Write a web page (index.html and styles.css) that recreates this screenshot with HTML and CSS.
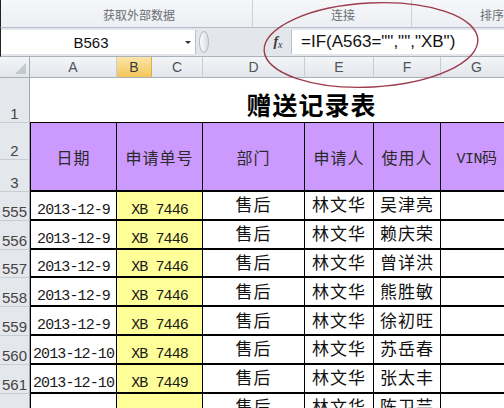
FILE: index.html
```html
<!DOCTYPE html>
<html lang="zh-CN">
<head>
<meta charset="utf-8">
<title>赠送记录表</title>
<link rel="stylesheet" href="styles.css">
</head>
<body>
<div class="screen">
  <div class="ribbon">
    <div class="group g1"><span>获取外部数据</span></div>
    <div class="group g2"><span>连接</span></div>
    <div class="group g3"><span>排序</span></div>
  </div>
  <div class="fbar">
    <div class="namebox">B563</div>
    <div class="nb-arrow"><span class="tri"></span></div>
    <div class="splitter"><span class="handle"></span></div>
    <div class="fx"><span class="fx-f">f</span><span class="fx-x">x</span></div>
    <div class="formula">=IF(A563="","","XB")</div>
  </div>
  <div class="sheet">
    <div class="ch corner"><span class="corner-tri"></span></div>
    <div class="ch">A</div>
    <div class="ch sel">B</div>
    <div class="ch">C</div>
    <div class="ch">D</div>
    <div class="ch">E</div>
    <div class="ch">F</div>
    <div class="ch">G</div>

    <div class="rh">1</div>
    <div class="title">赠送记录表</div>

    <div class="rh">2</div>
    <div class="hd a">日期</div>
    <div class="hd bc">申请单号</div>
    <div class="hd">部门</div>
    <div class="hd">申请人</div>
    <div class="hd">使用人</div>
    <div class="hd vin">VIN码</div>
    <div class="rh">3</div>

    <div class="rh">555</div><div class="c a">2013-12-9</div><div class="c bc">XB 7446</div><div class="c">售后</div><div class="c">林文华</div><div class="c">吴津亮</div><div class="c"></div>
    <div class="rh">556</div><div class="c a">2013-12-9</div><div class="c bc">XB 7446</div><div class="c">售后</div><div class="c">林文华</div><div class="c">赖庆荣</div><div class="c"></div>
    <div class="rh">557</div><div class="c a">2013-12-9</div><div class="c bc">XB 7446</div><div class="c">售后</div><div class="c">林文华</div><div class="c">曾详洪</div><div class="c"></div>
    <div class="rh">558</div><div class="c a">2013-12-9</div><div class="c bc">XB 7446</div><div class="c">售后</div><div class="c">林文华</div><div class="c">熊胜敏</div><div class="c"></div>
    <div class="rh">559</div><div class="c a">2013-12-9</div><div class="c bc">XB 7446</div><div class="c">售后</div><div class="c">林文华</div><div class="c">徐初旺</div><div class="c"></div>
    <div class="rh">560</div><div class="c a">2013-12-10</div><div class="c bc">XB 7448</div><div class="c">售后</div><div class="c">林文华</div><div class="c">苏岳春</div><div class="c"></div>
    <div class="rh">561</div><div class="c a">2013-12-10</div><div class="c bc">XB 7449</div><div class="c">售后</div><div class="c">林文华</div><div class="c">张太丰</div><div class="c"></div>
    <div class="rh">562</div><div class="c a"></div><div class="c bc"></div><div class="c">售后</div><div class="c">林文华</div><div class="c">陈卫芸</div><div class="c"></div>
  </div>
  <svg class="annot" width="504" height="408" viewBox="0 0 504 408">
    <ellipse cx="371" cy="45" rx="107" ry="42" transform="rotate(-3 371 45)" fill="none" stroke="#9c3b4c" stroke-width="1.4"/>
  </svg>
</div>
</body>
</html>
```

FILE: styles.css
```css
body {
  margin: 0;
}

.screen {
  position: relative;
  width: 504px;
  height: 408px;
  overflow: hidden;
  background: #fff;
  font-family: "Liberation Sans", Arial, sans-serif;
}

/* ribbon group labels */
.ribbon {
  display: flex;
  height: 27px;
  background: linear-gradient(#f6f7f9, #eceff3);
  border-left: 1px solid #222;
}

.group {
  display: flex;
  align-items: center;
  padding-top: 2px;
  box-sizing: border-box;
  border-right: 1px solid #cbd1d9;
  font-family: "Noto Sans CJK SC", sans-serif;
  font-size: 12px;
  color: #6a6d72;
  white-space: nowrap;
}

.g1 {
  width: 254px;
  padding-left: 102px;
}

.g2 {
  width: 160px;
  padding-left: 78px;
}

.g3 {
  flex: 1;
  padding-left: 68px;
  border-right: none;
}

/* formula bar */
.fbar {
  display: flex;
  height: 24px;
  padding: 2px 0 2px;
  background: #e3e7ec;
  border-top: 1px solid #b5bcc6;
  border-bottom: 1px solid #a9b1bb;
  border-left: 1px solid #222;
}

.namebox {
  width: 180px;
  background: #fff;
  display: flex;
  align-items: center;
  justify-content: center;
  font-size: 15px;
  color: #111;
}

.nb-arrow {
  width: 14px;
  background: #fff;
  display: flex;
  align-items: center;
  justify-content: center;
  border-right: 1px solid #b9c0c8;
}

.tri {
  width: 0;
  height: 0;
  border-left: 3px solid transparent;
  border-right: 3px solid transparent;
  border-top: 3px solid #333;
}

.splitter {
  width: 69px;
  display: flex;
  align-items: center;
  padding-left: 3px;
  box-sizing: border-box;
}

.handle {
  width: 8px;
  height: 20px;
  border-radius: 50%;
  border: 1px solid #b3bac3;
  background: linear-gradient(90deg, #fdfdfe, #d8dde3);
}

.fx {
  width: 26px;
  display: flex;
  align-items: center;
  justify-content: center;
  font-family: "Liberation Serif", serif;
  font-style: italic;
  color: #3a3a3a;
  border-right: 1px solid #b9c0c8;
}

.fx-f {
  font-size: 14px;
  font-weight: bold;
}

.fx-x {
  font-size: 10px;
  margin-top: 4px;
}

.formula {
  flex: 1;
  background: #fff;
  display: flex;
  align-items: center;
  padding-left: 9px;
  font-size: 17px;
  color: #111;
  white-space: nowrap;
}

/* sheet grid */
.sheet {
  display: grid;
  width: 513px;
  grid-template-columns: 30px 87px 35px 51px 102px 69px 67px 72px;
  grid-template-rows: 21px 45px 37px 32px repeat(8, 28.8px);
}

.sheet > div {
  box-sizing: border-box;
  min-width: 0;
}

.ch {
  display: flex;
  align-items: center;
  justify-content: center;
  background: linear-gradient(#f3f5f7, #e2e6eb);
  border-right: 1px solid #c8cdd4;
  border-bottom: 1px solid #a6aeb8;
  font-size: 14px;
  color: #505458;
}

.ch.sel {
  background: linear-gradient(#fbe5a6, #f4c65c);
  border-right-color: #dfae48;
  color: #3a3a3a;
}

.corner {
  position: relative;
  border-right-color: #a6aeb8;
}

.corner-tri {
  position: absolute;
  right: 3px;
  bottom: 3px;
  width: 0;
  height: 0;
  border-left: 11px solid transparent;
  border-bottom: 11px solid #c3c8cf;
}

.rh {
  display: flex;
  align-items: flex-end;
  justify-content: center;
  background: #e4e7eb;
  border-right: 1px solid #9ea7b2;
  border-bottom: 1px solid #c8cdd4;
  font-size: 15px;
  color: #444;
}

.title {
  grid-column: 2 / 9;
  display: flex;
  align-items: flex-end;
  justify-content: center;
  padding: 0 0 0 80px;
  border-bottom: 1px solid #000;
  font-family: "Noto Sans CJK SC", sans-serif;
  font-weight: bold;
  font-size: 25px;
  color: #000;
  letter-spacing: 1px;
}

.hd {
  grid-row: span 2;
  display: flex;
  align-items: center;
  justify-content: center;
  background: #cc99ff;
  border-right: 1px solid #000;
  border-bottom: 2px solid #000;
  font-family: "Noto Sans CJK SC", sans-serif;
  font-size: 16px;
  color: #2a2a2a;
  letter-spacing: 1px;
  white-space: nowrap;
}

.hd.a {
  border-left: 1px solid #000;
}

.hd.bc {
  grid-column: span 2;
}

.hd.vin {
  font-family: "Liberation Mono", "Noto Sans CJK SC", monospace;
  font-size: 15px;
  letter-spacing: -0.5px;
}

.c {
  display: flex;
  align-items: center;
  justify-content: center;
  padding-bottom: 3px;
  border-right: 1px solid #000;
  border-bottom: 2px solid #000;
  font-family: "Noto Sans CJK SC", sans-serif;
  font-size: 17px;
  color: #111;
  letter-spacing: 1px;
  white-space: nowrap;
  overflow: hidden;
}

.c.a,
.c.bc {
  align-items: flex-end;
  padding-bottom: 1px;
  font-family: "Liberation Mono", monospace;
  font-size: 15px;
  line-height: 1;
  letter-spacing: -0.9px;
  color: #1a1a1a;
}

.c.a {
  border-left: 1px solid #000;
}

.c.bc {
  grid-column: span 2;
  background: #ffff99;
}

.annot {
  position: absolute;
  left: 0;
  top: 0;
  pointer-events: none;
}
```
